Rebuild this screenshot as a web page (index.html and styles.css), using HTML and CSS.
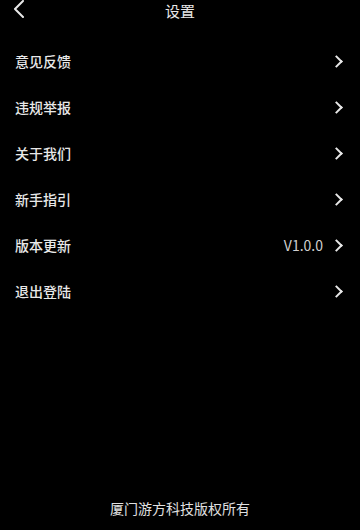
FILE: index.html
```html
<!DOCTYPE html>
<html lang="zh-CN">
<head>
  <meta charset="UTF-8">
  <meta name="viewport" content="width=device-width, initial-scale=1.0">
  <title>设置</title>
  <link rel="stylesheet" href="styles.css">
</head>
<body>
  <div class="page">
    <div class="header">
      <span class="back">
        <svg width="12" height="18" viewBox="0 0 12 18"><path d="M10 1 L2 9 L10 17" fill="none" stroke="#e8e8e8" stroke-width="2" stroke-linecap="round" stroke-linejoin="round"/></svg>
      </span>
      <div class="title">设置</div>
    </div>

    <ul class="menu">
      <li class="menu-item"><span class="label">意见反馈</span><span class="arrow"></span></li>
      <li class="menu-item"><span class="label">违规举报</span><span class="arrow"></span></li>
      <li class="menu-item"><span class="label">关于我们</span><span class="arrow"></span></li>
      <li class="menu-item"><span class="label">新手指引</span><span class="arrow"></span></li>
      <li class="menu-item"><span class="label">版本更新</span><span class="value">V1.0.0</span><span class="arrow"></span></li>
      <li class="menu-item"><span class="label">退出登陆</span><span class="arrow"></span></li>
    </ul>

    <div class="footer">厦门游方科技版权所有</div>
  </div>
</body>
</html>
```

FILE: styles.css
```css
* {
  margin: 0;
  padding: 0;
  box-sizing: border-box;
}

body {
  background: #000;
  color: #e8e8e8;
  font-family: "Noto Sans CJK SC", "Noto Sans", sans-serif;
  font-weight: 500;
}

.page {
  min-height: 530px;
  display: flex;
  flex-direction: column;
}

.header {
  position: relative;
  height: 20px;
  padding-top: 2px;
  display: flex;
  align-items: center;
  justify-content: center;
}

.back {
  position: absolute;
  left: 13px;
  top: 0;
  height: 18px;
  display: flex;
  align-items: center;
}

.title {
  font-size: 15px;
  line-height: 16px;
  font-weight: 400;
}

.menu {
  list-style: none;
  margin-top: 18px;
}

.menu-item {
  height: 46px;
  display: flex;
  align-items: center;
  padding: 0 17px 0 15px;
  font-size: 14px;
}

.label {
  flex: 1;
}

.value {
  color: #d0d0d0;
  font-weight: 400;
  margin-right: 9px;
}

.arrow {
  width: 9px;
  height: 9px;
  border-top: 2px solid #e8e8e8;
  border-right: 2px solid #e8e8e8;
  transform: rotate(45deg);
  margin-right: 2px;
}

.footer {
  margin-top: auto;
  text-align: center;
  font-size: 14px;
  font-weight: 400;
  padding-bottom: 12px;
  color: #e0e0e0;
}
```
